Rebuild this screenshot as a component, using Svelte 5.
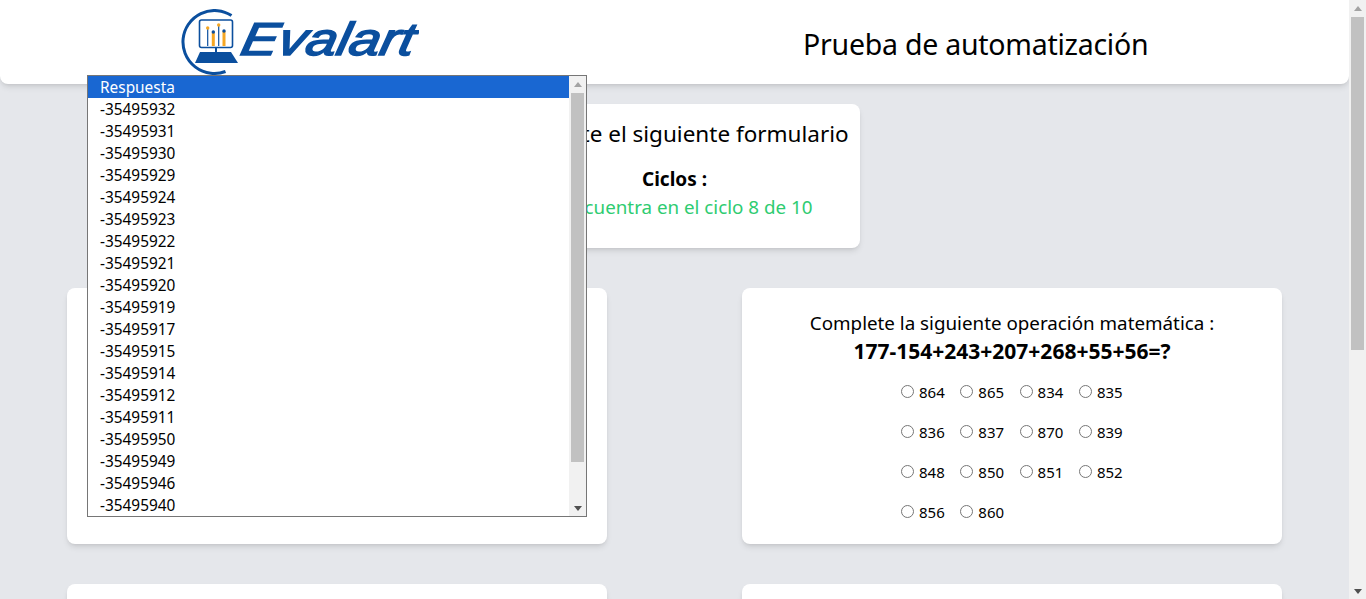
<script lang="ts">
  const answers = [
    'Respuesta', '-35495932', '-35495931', '-35495930', '-35495929', '-35495924', '-35495923',
    '-35495922', '-35495921', '-35495920', '-35495919', '-35495917', '-35495915', '-35495914',
    '-35495912', '-35495911', '-35495950', '-35495949', '-35495946', '-35495940'
  ];
  const options = [864, 865, 834, 835, 836, 837, 870, 839, 848, 850, 851, 852, 856, 860];
</script>

<div class="window">
  <div class="page">
    <header class="top">
      <svg class="logo" width="238" height="66" viewBox="0 0 238 66" role="img" aria-label="Evalart">
        <path d="M50.500 6.500A31.500 31.500 0 1 0 44.500 62.500" fill="none" stroke="#0b4f9e" stroke-width="3" />
        <rect x="18.500" y="11" width="33" height="27.500" rx="2" fill="#fff" stroke="#0b4f9e" stroke-width="1.600" />
        <path d="M26.700 19v18M37.700 16v21" stroke="#0b4f9e" stroke-width="1.200" fill="none" />
        <path d="M32.300 23v14M43 22v15" stroke="#f5a623" stroke-width="3" fill="none" />
        <circle cx="26.700" cy="19" r="1.700" fill="#f5a623" />
        <circle cx="37.700" cy="16" r="1.700" fill="#f5a623" />
        <circle cx="32.300" cy="23" r="1.700" fill="#0b4f9e" />
        <circle cx="43" cy="22" r="1.700" fill="#0b4f9e" />
        <path d="M34 38.500h2v5h-2Z" fill="#0b4f9e" />
        <path d="M19 43h31l7 11H14Z" fill="#0b4f9e" />
        <g transform="translate(58 46) skewX(-12)">
          <text class="wordmark" textLength="173" lengthAdjust="spacingAndGlyphs">Evalart</text>
        </g>
      </svg>
      <h1>Prueba de automatización</h1>
    </header>

    <section class="card summary">
      <h2>Complete el siguiente formulario</h2>
      <p class="cycles">Ciclos :</p>
      <p class="status">Se encuentra en el ciclo 8 de 10</p>
    </section>

    <div class="grid">
      <section class="card question">
        <div class="select">
          <div class="listbox">
            <ul>
              {#each answers as answer, i}
                <li class:selected={i === 0}>{answer}</li>
              {/each}
            </ul>
            <div class="bar small">
              <span class="arrow up"></span>
              <span class="thumb"></span>
              <span class="arrow down"></span>
            </div>
          </div>
        </div>
      </section>

      <section class="card question">
        <p class="prompt">Complete la siguiente operación matemática :</p>
        <p class="sum">177-154+243+207+268+55+56=?</p>
        <div class="radios">
          {#each options as option}
            <label><input type="radio" name="op" value={option} />{option}</label>
          {/each}
        </div>
      </section>

      <section class="card question"></section>
      <section class="card question"></section>
    </div>
  </div>

  <div class="bar page-bar">
    <span class="arrow up"></span>
    <span class="thumb"></span>
    <span class="arrow down"></span>
  </div>
</div>

<style>
  :global(body) {
    margin: 0;
    overflow: hidden;
    background: #e5e7eb;
  }

  .window {
    display: flex;
    height: 599px;
    overflow: hidden;
    font-family: "Noto Sans", "Open Sans", sans-serif;
    color: #000;
  }

  .page {
    flex: 1;
    min-width: 0;
    background: #e5e7eb;
  }

  .top {
    display: flex;
    align-items: center;
    height: 84px;
    padding-left: 181px;
    background: #fff;
    border-radius: 0 0 8px 8px;
    box-shadow: 0 4px 6px -1px rgba(0, 0, 0, 0.1), 0 2px 4px -2px rgba(0, 0, 0, 0.1);
  }

  .logo {
    flex: none;
  }

  .wordmark {
    font-family: "Liberation Sans", sans-serif;
    font-size: 46px;
    font-style: italic;
    font-weight: 400;
    fill: #0b4f9e;
    stroke: #0b4f9e;
    stroke-width: 1.600px;
  }

  h1 {
    margin: 3px 0 0 384px;
    font-size: 28.500px;
    font-weight: 400;
    line-height: 36px;
    letter-spacing: -0.25px;
  }

  .card {
    background: #fff;
    border-radius: 8px;
    box-shadow: 0 4px 6px -1px rgba(0, 0, 0, 0.1), 0 2px 4px -2px rgba(0, 0, 0, 0.1);
  }

  .summary {
    box-sizing: border-box;
    width: 371px;
    height: 144px;
    margin: 20px auto 0;
    padding-top: 12px;
    text-align: center;
  }

  h2 {
    margin: 0 0 13px;
    font-size: 22.500px;
    font-weight: 400;
    line-height: 36px;
    white-space: nowrap;
  }

  .cycles {
    margin: 0;
    font-size: 19px;
    font-weight: 700;
    line-height: 28px;
  }

  .status {
    margin: 0;
    font-size: 18.800px;
    line-height: 28px;
    color: #2ecc71;
    white-space: nowrap;
  }

  .grid {
    display: grid;
    grid-template-columns: 540px 540px;
    grid-auto-rows: 256px;
    gap: 40px 135px;
    margin-top: 40px;
    padding-left: 67px;
  }

  .question {
    box-sizing: border-box;
    padding: 21px 20px;
    text-align: center;
  }

  .prompt {
    margin: 0;
    font-size: 18.800px;
    line-height: 28px;
  }

  .sum {
    margin: 0;
    font-size: 21px;
    font-weight: 700;
    line-height: 28px;
  }

  .radios {
    display: grid;
    grid-template-columns: repeat(4, 59.300px);
    grid-auto-rows: 40px;
    margin: 7px 0 0 139px;
    font-size: 15px;
    text-align: left;
  }

  .radios label {
    display: flex;
    align-items: center;
  }

  .radios input {
    margin: 0 5px 2px 0;
  }

  .select {
    position: relative;
  }

  .listbox {
    position: absolute;
    top: -234px;
    left: 0;
    display: flex;
    box-sizing: border-box;
    width: 500px;
    height: 442px;
    background: #fff;
    border: 1px solid #767676;
    text-align: left;
    z-index: 2;
  }

  ul {
    flex: 1;
    margin: 0;
    padding: 0;
    list-style: none;
    font-size: 15.400px;
  }

  li {
    height: 22px;
    padding-left: 12px;
    line-height: 24px;
  }

  li.selected {
    background: #1967d2;
    color: #fff;
  }

  .bar {
    display: flex;
    flex: none;
    flex-direction: column;
    align-items: center;
    width: 17px;
    background: #f1f1f1;
  }

  .thumb {
    width: 13px;
    background: #c1c1c1;
  }

  .page-bar .thumb {
    height: 333px;
  }

  .small .thumb {
    height: 369px;
  }

  .arrow {
    flex: none;
    width: 0;
    height: 0;
    border-left: 4px solid transparent;
    border-right: 4px solid transparent;
  }

  .arrow.up {
    margin: 6px 0 6px;
    border-bottom: 5px solid #a3a3a3;
  }

  .arrow.down {
    margin: auto 0 5px;
    border-top: 5px solid #505050;
  }
</style>
